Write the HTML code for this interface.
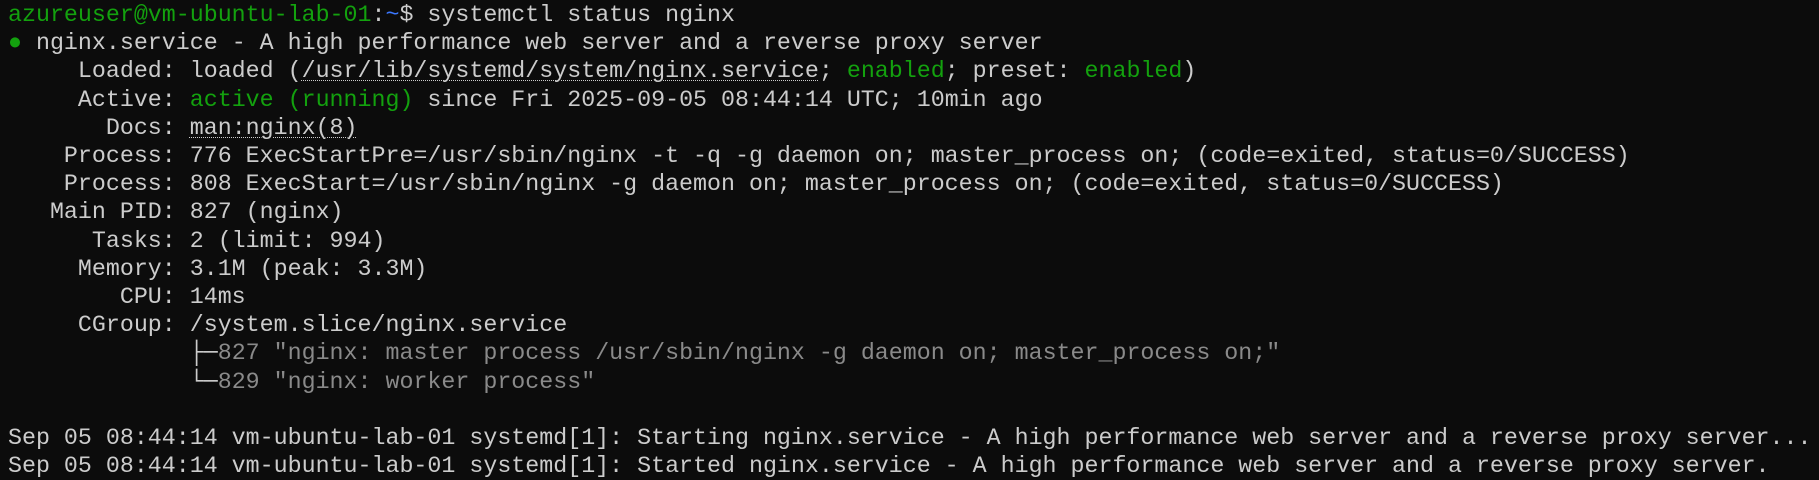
<!DOCTYPE html>
<html><head><meta charset="utf-8"><style>
html,body{margin:0;padding:0;background:#0c0c0c;width:1819px;height:480px;overflow:hidden}
pre{margin:0;padding:1px 0 0 8px;font-family:"Liberation Mono","DejaVu Sans Mono",monospace;font-size:23.3px;line-height:28.2px;color:#cccccc;white-space:pre}
.g{color:#13a10e}.b{color:#3b78ff}.d{color:#8a8a8a}
.u{text-decoration:underline dotted 1px;text-underline-offset:3px}
</style></head><body><pre><span class="g">azureuser@vm-ubuntu-lab-01</span>:<span class="b">~</span>$ systemctl status nginx
<span class="g">●</span> nginx.service - A high performance web server and a reverse proxy server
     Loaded: loaded (<span class="u">/usr/lib/systemd/system/nginx.service</span>; <span class="g">enabled</span>; preset: <span class="g">enabled</span>)
     Active: <span class="g">active (running)</span> since Fri 2025-09-05 08:44:14 UTC; 10min ago
       Docs: <span class="u">man:nginx(8)</span>
    Process: 776 ExecStartPre=/usr/sbin/nginx -t -q -g daemon on; master_process on; (code=exited, status=0/SUCCESS)
    Process: 808 ExecStart=/usr/sbin/nginx -g daemon on; master_process on; (code=exited, status=0/SUCCESS)
   Main PID: 827 (nginx)
      Tasks: 2 (limit: 994)
     Memory: 3.1M (peak: 3.3M)
        CPU: 14ms
     CGroup: /system.slice/nginx.service
             ├─<span class="d">827 "nginx: master process /usr/sbin/nginx -g daemon on; master_process on;"</span>
             └─<span class="d">829 "nginx: worker process"</span>

Sep 05 08:44:14 vm-ubuntu-lab-01 systemd[1]: Starting nginx.service - A high performance web server and a reverse proxy server...
Sep 05 08:44:14 vm-ubuntu-lab-01 systemd[1]: Started nginx.service - A high performance web server and a reverse proxy server.</pre></body></html>
